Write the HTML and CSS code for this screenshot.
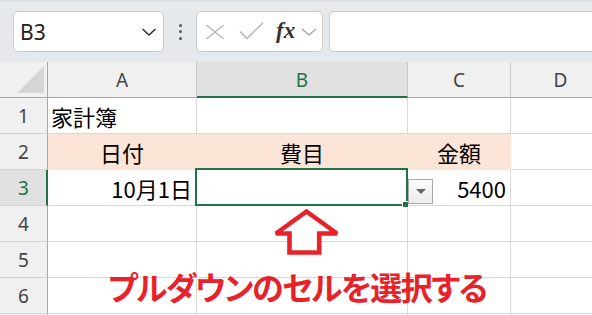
FILE: index.html
```html
<!DOCTYPE html>
<html lang="ja">
<head>
<meta charset="utf-8">
<link rel="stylesheet" href="styles.css">
</head>
<body>
<div class="toolbar">
  <div class="namebox">
    <span class="ref">B3</span>
    <svg class="chev" width="16" height="10" viewBox="0 0 16 10"><polyline points="1.5,2 8,8 14.5,2" fill="none" stroke="#333" stroke-width="1.6"/></svg>
  </div>
  <div class="dots"><i></i><i></i><i></i></div>
  <div class="fbox">
    <svg class="ico-x" width="20" height="16" viewBox="0 0 20 16"><path d="M1.5 1 L18.5 15 M18.5 1 L1.5 15" stroke="#b4b4b4" stroke-width="1.4" fill="none"/></svg>
    <svg class="ico-ok" width="25" height="18" viewBox="0 0 25 18"><polyline points="1,9.5 8,16.5 24,0.8" fill="none" stroke="#b4b4b4" stroke-width="1.4"/></svg>
    <span class="fx">fx</span>
    <svg class="chev2" width="16" height="10" viewBox="0 0 16 10"><polyline points="1,2 8,8 15,2" fill="none" stroke="#a0a0a0" stroke-width="1.3"/></svg>
  </div>
  <div class="finput"></div>
</div>
<div class="sheet">
  <div class="grid">
    <div class="corner"><svg width="48" height="36" viewBox="0 0 48 36"><polygon points="44,4 44,31 17,31" fill="#d6d6d6"/></svg></div>
    <div class="ch">A</div>
    <div class="ch on">B</div>
    <div class="ch">C</div>
    <div class="ch">D</div>

    <div class="rh">1</div>
    <div class="c left">家計簿</div>
    <div class="c"></div>
    <div class="c"></div>
    <div class="c"></div>

    <div class="rh">2</div>
    <div class="c fill center">日付</div>
    <div class="c fill center">費目</div>
    <div class="c fill center">金額</div>
    <div class="c"></div>

    <div class="rh on">3</div>
    <div class="c right">10月1日</div>
    <div class="c sel"><span class="handle"></span><span class="ddbtn"><i></i></span></div>
    <div class="c right">5400</div>
    <div class="c"></div>

    <div class="rh">4</div>
    <div class="c"></div>
    <div class="c"></div>
    <div class="c"></div>
    <div class="c"></div>

    <div class="rh">5</div>
    <div class="c"></div>
    <div class="c"></div>
    <div class="c"></div>
    <div class="c"></div>

    <div class="rh">6</div>
    <div class="c"></div>
    <div class="c"></div>
    <div class="c"></div>
    <div class="c"></div>

    <div class="rh"></div>
    <div class="c"></div>
    <div class="c"></div>
    <div class="c"></div>
    <div class="c"></div>
  </div>
  <svg class="arrow" width="80" height="56" viewBox="0 0 80 56">
    <polygon points="38.5,6.5 69,28.5 51.2,28.5 51.2,47.5 21.5,47.5 21.5,28.5 8,28.5" fill="#fff" stroke="#e8222b" stroke-width="4.6" stroke-linejoin="miter" stroke-miterlimit="3"/>
  </svg>
  <div class="note">プルダウンのセルを選択する</div>
</div>
</body>
</html>
```
FILE: styles.css
```css
* { box-sizing: border-box; }
html, body { margin: 0; padding: 0; }
body {
  width: 592px;
  height: 315px;
  overflow: hidden;
  background: #fff;
  font-family: "Noto Sans CJK JP", sans-serif;
}

/* ---------- toolbar ---------- */
.toolbar {
  height: 62px;
  background: #e6e9ec;
  border-top: 2px solid #dcdfe3;
  display: flex;
  align-items: flex-start;
  padding: 9px 0 0 13px;
  overflow: hidden;
}
.namebox {
  flex: 0 0 151px;
  height: 41px;
  background: #fff;
  border: 1px solid #cbcbcb;
  border-radius: 5px;
  display: flex;
  align-items: center;
  justify-content: space-between;
  padding: 0 6px 0 6px;
}
.ref {
  font-family: "Noto Sans", sans-serif;
  font-size: 21px;
  color: #222;
  line-height: 1;
  margin-top: 1px;
}
.chev { margin-top: 1px; }
.dots {
  flex: 0 0 32px;
  height: 41px;
  display: flex;
  flex-direction: column;
  align-items: center;
  justify-content: center;
  gap: 3.5px;
}
.dots i {
  display: block;
  width: 3px;
  height: 3px;
  border-radius: 50%;
  background: #555;
}
.fbox {
  flex: 0 0 127px;
  height: 41px;
  background: #fff;
  border: 1px solid #cbcbcb;
  border-radius: 5px;
  display: flex;
  align-items: center;
  padding-left: 8px;
}
.ico-x { margin-right: 14px; margin-top: 1px; }
.ico-ok { margin-right: 12px; margin-top: -2px; }
.fx {
  font-family: "Liberation Serif", serif;
  font-style: italic;
  font-weight: 700;
  font-size: 23px;
  line-height: 1;
  color: #333;
  margin-right: 6px;
  margin-top: -2px;
}
.chev2 { margin-top: 1px; }
.finput {
  flex: 0 0 300px;
  height: 41px;
  margin-left: 6px;
  background: #fff;
  border: 1px solid #cbcbcb;
  border-radius: 5px;
}

/* ---------- sheet ---------- */
.sheet {
  position: relative;
  height: 253px;
  overflow: hidden;
}
.grid {
  display: grid;
  grid-template-columns: 48px 149px 211px 103px 100px;
  grid-auto-rows: 36px;
}
.corner, .ch, .rh, .c {
  border-right: 1px solid #d9d9d9;
  border-bottom: 1px solid #d9d9d9;
}
.corner {
  background: #f0f0f0;
  border-right-color: #a8a8a8;
  border-bottom-color: #a8a8a8;
}
.corner svg { display: block; }
.ch, .rh {
  background: #f0f0f0;
  font-family: "Noto Sans", sans-serif;
  font-size: 19px;
  color: #444;
  display: flex;
  align-items: center;
  justify-content: center;
}
.ch {
  border-right-color: #c8c8c8;
  border-bottom-color: #a8a8a8;
  padding-top: 1px;
}
.ch.on {
  background: #e1e1e1;
  color: #217346;
  border-bottom: 2px solid #217346;
  padding-top: 2px;
}
.rh {
  border-right-color: #a8a8a8;
  border-bottom-color: #d4d4d4;
}
.rh.on {
  background: #e1e1e1;
  color: #217346;
  border-right: 2px solid #217346;
  padding-left: 1px;
}
.c {
  background: #fff;
  font-size: 22px;
  color: #000;
  display: flex;
  align-items: center;
  line-height: 1;
  white-space: nowrap;
}
.c.left { padding-left: 3px; }
.c.right { justify-content: flex-end; padding-right: 4px; }
.c.center { justify-content: center; }
.c.fill {
  background: #fce4d6;
  border-right-color: #fce4d6;
  border-bottom-color: #fce4d6;
}

.sel { position: relative; }
.sel::after {
  content: "";
  position: absolute;
  left: -2px;
  top: -2px;
  right: -1px;
  bottom: -1px;
  border: 2px solid #217346;
}
.handle {
  position: absolute;
  z-index: 1;
  left: 205px;
  top: 31px;
  width: 7px;
  height: 7px;
  background: #217346;
  border: 1px solid #fff;
}
.ddbtn {
  position: absolute;
  z-index: 1;
  left: 211px;
  top: 9px;
  width: 25px;
  height: 25px;
  border: 1px solid #a9a9a9;
  background: linear-gradient(#fbfbfb, #ececec);
  display: flex;
  align-items: center;
  justify-content: center;
}
.ddbtn i {
  display: block;
  width: 0;
  height: 0;
  border-left: 5px solid transparent;
  border-right: 5px solid transparent;
  border-top: 5px solid #666;
}

.arrow {
  position: absolute;
  left: 268px;
  top: 143px;
}
.note {
  position: absolute;
  left: 108px;
  top: 206px;
  font-size: 32px;
  line-height: 36px;
  font-weight: 700;
  color: #e8222b;
  white-space: nowrap;
  font-feature-settings: "palt";
  letter-spacing: -1.5px;
}
```
